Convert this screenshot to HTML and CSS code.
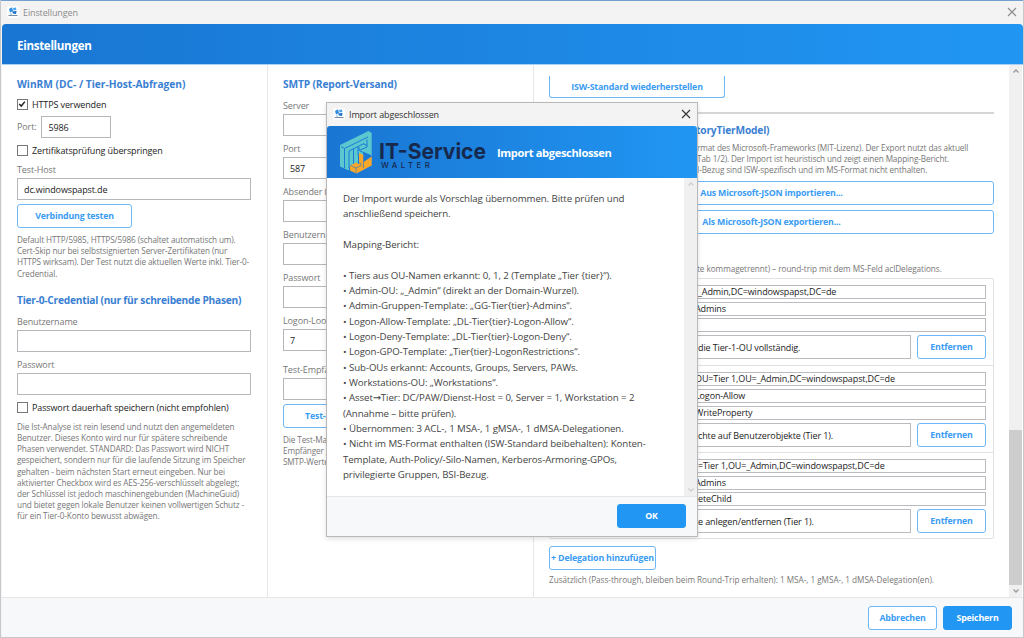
FILE: index.html
```html
<!DOCTYPE html>
<html lang="de">
  <head>
    <meta charset="utf-8" />
    <title>Einstellungen</title>
    <link rel="stylesheet" href="styles.css" />
  </head>
  <body>
    <svg class="defs" width="0" height="0">
      <symbol id="app-icon" viewBox="0 0 12 12">
        <rect width="12" height="12" rx="2" fill="#fdfdfd" />
        <path d="M2 3 L5 1.2 L6 5 L3 6.5 Z" fill="#2d8be0" />
        <path d="M6 2 L9 1.6 L9.4 4 L6.5 4.6 Z" fill="#4aa5ee" />
        <path d="M5 5.5 L9.6 5 L9 8 L6 7.6 Z" fill="#1b6fc4" />
        <path d="M1.5 9.5 H10.5" stroke="#55708c" stroke-width=".8" />
        <path d="M3 8 H5" stroke="#7fb6e6" stroke-width="1" />
      </symbol>
      <symbol id="close" viewBox="0 0 10 10">
        <path d="M1 1 L9 9 M9 1 L1 9" stroke="currentColor" stroke-width="1.1" />
      </symbol>
      <symbol id="up" viewBox="0 0 8 6">
        <path d="M1.5 4.5 L4 2 L6.5 4.5" fill="none" stroke="currentColor" stroke-width="1.3" />
      </symbol>
      <symbol id="down" viewBox="0 0 8 6">
        <path d="M1.5 1.5 L4 4 L6.5 1.5" fill="none" stroke="currentColor" stroke-width="1.3" />
      </symbol>
    </svg>

    <div class="window">
      <div class="titlebar">
        <svg class="app-icon"><use href="#app-icon" /></svg>
        <span class="title-text">Einstellungen</span>
        <svg class="close"><use href="#close" /></svg>
      </div>
      <div class="header">Einstellungen</div>

      <div class="content">
        <div class="column">
          <h2>WinRM (DC- / Tier-Host-Abfragen)</h2>
          <div class="check first">
            <span class="box"><svg viewBox="0 0 11 11"><path d="M1.5 4.8 L4 7.4 L8.4 2" fill="none" stroke="#222" stroke-width="1.8" /></svg></span>
            <span>HTTPS verwenden</span>
          </div>
          <div class="port-row">
            <span class="label">Port:</span>
            <div class="input">5986</div>
          </div>
          <div class="check second">
            <span class="box"></span>
            <span>Zertifikatsprüfung überspringen</span>
          </div>
          <div class="label">Test-Host</div>
          <div class="input">dc.windowspapst.de</div>
          <div class="button test">Verbindung testen</div>
          <p class="help">Default HTTP/5985, HTTPS/5986 (schaltet automatisch um).<br />Cert-Skip nur bei selbstsignierten Server-Zertifikaten (nur<br />HTTPS wirksam). Der Test nutzt die aktuellen Werte inkl. Tier-0-<br />Credential.</p>
          <h2 class="credential">Tier-0-Credential (nur für schreibende Phasen)</h2>
          <div class="label">Benutzername</div>
          <div class="input"></div>
          <div class="label">Passwort</div>
          <div class="input"></div>
          <div class="check third">
            <span class="box"></span>
            <span>Passwort dauerhaft speichern (nicht empfohlen)</span>
          </div>
          <p class="help">Die Ist-Analyse ist rein lesend und nutzt den angemeldeten<br />Benutzer. Dieses Konto wird nur für spätere schreibende<br />Phasen verwendet. STANDARD: Das Passwort wird NICHT<br />gespeichert, sondern nur für die laufende Sitzung im Speicher<br />gehalten - beim nächsten Start erneut eingeben. Nur bei<br />aktivierter Checkbox wird es AES-256-verschlüsselt abgelegt;<br />der Schlüssel ist jedoch maschinengebunden (MachineGuid)<br />und bietet gegen lokale Benutzer keinen vollwertigen Schutz -<br />für ein Tier-0-Konto bewusst abwägen.</p>
        </div>

        <div class="column smtp">
          <h2>SMTP (Report-Versand)</h2>
          <div class="label">Server</div>
          <div class="input"></div>
          <div class="label">Port</div>
          <div class="input">587</div>
          <div class="label">Absender (</div>
          <div class="input"></div>
          <div class="label">Benutzerna</div>
          <div class="input"></div>
          <div class="label">Passwort</div>
          <div class="input"></div>
          <div class="label">Logon-Loo</div>
          <div class="input">7</div>
          <div class="label recipient">Test-Empfä</div>
          <div class="input"></div>
          <div class="button test mail">Test-M</div>
          <p class="help">Die Test-Ma<br />Empfänger g<br />SMTP-Werte</p>
        </div>

        <div class="column tiers">
          <div class="button reset">ISW-Standard wiederherstellen</div>
          <div class="separator"></div>
          <h2 class="tail">toryTierModel)</h2>
          <p class="help tail">rmat des Microsoft-Frameworks (MIT-Lizenz). Der Export nutzt das aktuell<br />Tab 1/2). Der Import ist heuristisch und zeigt einen Mapping-Bericht.<br />I-Bezug sind ISW-spezifisch und im MS-Format nicht enthalten.</p>
          <div class="button wide">Aus Microsoft-JSON importieren...</div>
          <div class="button wide">Als Microsoft-JSON exportieren...</div>
          <p class="help tail list-help">te kommagetrennt) – round-trip mit dem MS-Feld aclDelegations.</p>
          <div class="delegations">
            <div class="delegation">
              <div class="field">_Admin,DC=windowspapst,DC=de</div>
              <div class="field cut">Admins</div>
              <div class="field"></div>
              <div class="note-row">
                <div class="field note">die Tier-1-OU vollständig.</div>
                <div class="button">Entfernen</div>
              </div>
            </div>
            <div class="delegation">
              <div class="field cut">OU=Tier 1,OU=_Admin,DC=windowspapst,DC=de</div>
              <div class="field cut">Logon-Allow</div>
              <div class="field cut">WriteProperty</div>
              <div class="note-row">
                <div class="field note">chte auf Benutzerobjekte (Tier 1).</div>
                <div class="button">Entfernen</div>
              </div>
            </div>
            <div class="delegation">
              <div class="field">=Tier 1,OU=_Admin,DC=windowspapst,DC=de</div>
              <div class="field cut">Admins</div>
              <div class="field">eteChild</div>
              <div class="note-row">
                <div class="field note cut">te anlegen/entfernen (Tier 1).</div>
                <div class="button">Entfernen</div>
              </div>
            </div>
          </div>
          <div class="button add">+ Delegation hinzufügen</div>
          <p class="help extra">Zusätzlich (Pass-through, bleiben beim Round-Trip erhalten): 1 MSA-, 1 gMSA-, 1 dMSA-Delegation(en).</p>
        </div>

        <div class="scrollbar">
          <svg class="arrow"><use href="#up" /></svg>
          <div class="thumb"></div>
          <svg class="arrow"><use href="#down" /></svg>
        </div>
      </div>

      <div class="footer">
        <div class="button">Abbrechen</div>
        <div class="button primary">Speichern</div>
      </div>
    </div>

    <div class="dialog">
      <div class="titlebar">
        <svg class="app-icon"><use href="#app-icon" /></svg>
        <span class="title-text">Import abgeschlossen</span>
        <svg class="close"><use href="#close" /></svg>
      </div>
      <div class="dialog-header">
        <svg class="logo" viewBox="0 0 150 51">
          <path d="M13 18 L41.500 4 L44.700 6 V29 L36 25 V30 L31 28 V36 L22 40 V43.500 L13 39.500 Z" fill="#5bc8cf" />
          <path d="M14 19.500 L17.500 21.500 L41 10 M17.500 22 V41 M22 24 V41 M26.500 22 V38 M22 24 L37 16.500 M31 20 V28 M32 20 V23.500 L40 20 V12.500 M36 16.500 L40 18.500 M33 24 L44 28.500" stroke="#1c79d6" stroke-width="1" fill="none" />
          <path d="M23 38.500 L29 35.500 L32 37 V26 L36.500 28 V35 L38 34 L44.700 29.500 V38.500 L29.500 46.500 L23 43.500 Z" fill="#f9a72b" />
          <path d="M29 40.500 V46 M36.500 29 V41 M23 38 L29 41 L34 38.500 V36.500 L31.500 35 V26" stroke="#1c79d6" stroke-width=".6" fill="none" />
          <text class="logo-name" x="52" y="31.500" textLength="107" lengthAdjust="spacingAndGlyphs">IT-Service</text>
          <text class="logo-sub" x="54" y="41" textLength="48.500">WALTER</text>
        </svg>
        <span>Import abgeschlossen</span>
      </div>
      <div class="dialog-body">
        <div class="report">Der Import wurde als Vorschlag übernommen. Bitte prüfen und
anschließend speichern.

Mapping-Bericht:

• Tiers aus OU-Namen erkannt: 0, 1, 2 (Template „Tier {tier}“).
• Admin-OU: „_Admin“ (direkt an der Domain-Wurzel).
• Admin-Gruppen-Template: „GG-Tier{tier}-Admins“.
• Logon-Allow-Template: „DL-Tier{tier}-Logon-Allow“.
• Logon-Deny-Template: „DL-Tier{tier}-Logon-Deny“.
• Logon-GPO-Template: „Tier{tier}-LogonRestrictions“.
• Sub-OUs erkannt: Accounts, Groups, Servers, PAWs.
• Workstations-OU: „Workstations“.
• Asset→Tier: DC/PAW/Dienst-Host = 0, Server = 1, Workstation = 2
(Annahme – bitte prüfen).
• Übernommen: 3 ACL-, 1 MSA-, 1 gMSA-, 1 dMSA-Delegationen.
• Nicht im MS-Format enthalten (ISW-Standard beibehalten): Konten-
Template, Auth-Policy/-Silo-Namen, Kerberos-Armoring-GPOs,
privilegierte Gruppen, BSI-Bezug.</div>
        <div class="scrollbar">
          <svg class="arrow"><use href="#up" /></svg>
          <svg class="arrow"><use href="#down" /></svg>
        </div>
      </div>
      <div class="dialog-footer">
        <div class="button primary">OK</div>
      </div>
    </div>
  </body>
</html>
```
FILE: styles.css
```css
* {
  box-sizing: border-box;
}
body {
  margin: 0;
  width: 1024px;
  height: 638px;
  overflow: hidden;
  background-color: #c6c8cb;
  font-family: "Open Sans", "DejaVu Sans", sans-serif;
  font-size: 9px;
  letter-spacing: -0.12px;
  color: #333;
}
.defs {
  position: absolute;
}
.window {
  display: flex;
  flex-direction: column;
  width: 1022px;
  height: 637px;
  margin-left: 1px;
  border-top: 1px solid #74a0cf;
  background-color: #f3f3f3;
}
.titlebar {
  display: flex;
  align-items: center;
  height: 23px;
  flex-shrink: 0;
  padding: 0 6px 1px 6px;
  background-color: #f3f3f3;
  color: #8c8c8c;
  font-size: 9px;
}
.app-icon {
  width: 12px;
  height: 12px;
}
.title-text {
  flex: 1;
  margin-left: 4px;
}
.close {
  width: 10px;
  height: 10px;
}
.header {
  display: flex;
  align-items: center;
  height: 41px;
  flex-shrink: 0;
  padding: 2px 0 0 15px;
  margin-left: 1px;
  border-bottom: 1px solid #a9cff5;
  border-radius: 4px 4px 0 0;
  background: linear-gradient(90deg, #1976d2, #2196f3);
  color: #fff;
  font-size: 11.6px;
  font-weight: 700;
  letter-spacing: -0.32px;
}
.content {
  display: flex;
  height: 532px;
  flex-shrink: 0;
  overflow: hidden;
  margin-left: 1px;
  background-color: #fff;
}
.column {
  width: 266px;
  flex-shrink: 0;
  padding: 12px 16px 0 15px;
  border-right: 1px solid #e6e6e6;
}
h2 {
  height: 16px;
  margin: 0;
  line-height: 15px;
  font-size: 10.2px;
  font-weight: 700;
  letter-spacing: -0.01px;
  color: #3a80d2;
  white-space: nowrap;
}
h2.credential {
  margin: 14px 0 6px;
  letter-spacing: -0.24px;
}
.check {
  display: flex;
  align-items: center;
  gap: 4px;
  height: 14px;
  color: #222;
  white-space: nowrap;
}
.check.first {
  margin: 4px 0 5px;
}
.check.second {
  margin: 5px 0 6px;
}
.check.third {
  margin: 6px 0 5px;
}
.box {
  display: block;
  width: 11px;
  height: 11px;
  border: 1px solid #777;
  background-color: #fff;
}
.box svg {
  display: block;
}
.port-row {
  display: flex;
  align-items: center;
  gap: 5px;
}
.port-row .input {
  width: 70px;
}
.label {
  height: 14px;
  margin-bottom: 1px;
  line-height: 14px;
  color: #777;
  white-space: nowrap;
}
.input {
  height: 22px;
  padding: 0 6px;
  border: 1px solid #b5b7bb;
  background-color: #fff;
  line-height: 21px;
  color: #222;
}
.input + .label {
  margin-top: 6px;
}
.button {
  display: flex;
  align-items: center;
  justify-content: center;
  height: 24px;
  border: 1px solid #6db8f7;
  border-radius: 3px;
  background-color: #fff;
  color: #3b9cf3;
  font-size: 8.8px;
  font-weight: 700;
  letter-spacing: -0.17px;
  white-space: nowrap;
}
.button.primary {
  border-color: #2196f3;
  background-color: #2196f3;
  color: #fff;
}
.button.test {
  width: 115px;
  margin-top: 4px;
}
.button.mail {
  justify-content: flex-start;
  padding-left: 21px;
}
.help {
  margin: 6px 0 0;
  font-size: 8.2px;
  line-height: 11.2px;
  color: #777;
  white-space: nowrap;
}
.smtp {
  overflow: hidden;
}
.smtp h2 {
  margin-bottom: 6px;
  letter-spacing: -0.13px;
}
.smtp .input + .recipient {
  margin-top: 12px;
}
.tiers {
  width: 475px;
  padding: 11px 15px 0;
  border-right: 0;
}
.button.reset {
  width: 176px;
  height: 22px;
  border-top: 0;
  border-radius: 0 0 3px 3px;
}
.separator {
  height: 2px;
  margin: 14px 0 9px;
  background-color: #d6d6d6;
}
/* text that continues from under the dialog */
.tail {
  padding-left: 148px;
}
.tiers h2 {
  padding-left: 147px;
  letter-spacing: -0.17px;
}
.tiers .help.tail {
  margin-top: 3px;
}
.button.wide {
  height: 24px;
  margin-top: 5px;
}
.tiers .help.list-help {
  margin: 29px 0 4px;
  letter-spacing: -0.05px;
}
.delegations {
  border: 1px solid #e2e2e2;
  border-radius: 2px;
}
.delegation {
  display: grid;
  gap: 2.8px;
  height: 86.5px;
  padding: 6px 7px 0;
  align-content: start;
}
.delegation + .delegation {
  border-top: 1px solid #e2e2e2;
}
.field {
  height: 14px;
  padding-left: 140px;
  border: 1px solid #b9bbbf;
  line-height: 12px;
  color: #222;
  white-space: nowrap;
}
.field.cut {
  padding-left: 137px;
}
.note-row {
  display: flex;
  gap: 6px;
}
.note {
  flex: 1;
  height: 24px;
  line-height: 23px;
}
.note-row .button {
  width: 69px;
}
.button.add {
  width: 107px;
  margin-top: 7px;
}
.tiers .extra {
  margin-top: 4px;
  letter-spacing: -0.03px;
}
.scrollbar {
  display: flex;
  flex-direction: column;
  align-items: center;
  justify-content: space-between;
  width: 13px;
  padding: 3px 0;
  background-color: #f0f0f0;
  color: #999;
}
.arrow {
  width: 8px;
  height: 6px;
}
.thumb {
  width: 13px;
  height: 155px;
  margin: auto 0 3px;
  background-color: #cdcdcd;
}
.footer {
  display: flex;
  justify-content: flex-end;
  gap: 6px;
  flex: 1;
  padding: 8px 11px 0 0;
  margin-left: 1px;
  border-top: 1px solid #e6e6e6;
  background-color: #f7f8fa;
}
.footer .button,
.dialog-footer .button {
  width: 69px;
}
.dialog {
  position: absolute;
  left: 326px;
  top: 102px;
  display: flex;
  flex-direction: column;
  width: 372px;
  height: 435px;
  border: 1px solid #b9b9b9;
  background-color: #f3f3f3;
  box-shadow: 0 2px 5px rgba(0, 0, 0, 0.12);
}
.dialog .titlebar {
  color: #333;
}
.dialog-header {
  display: flex;
  align-items: center;
  height: 52px;
  flex-shrink: 0;
  padding-top: 1px;
  border-radius: 3px 3px 0 0;
  background: linear-gradient(90deg, #1976d2, #2196f3);
  color: #fff;
  font-size: 11.1px;
  font-weight: 700;
  letter-spacing: -0.35px;
}
.logo {
  width: 150px;
  height: 51px;
  margin-right: 20px;
  overflow: visible;
}
.logo-name {
  font-family: Inter, sans-serif;
  font-size: 22px;
  font-weight: 700;
  letter-spacing: 0;
  fill: #16294d;
}
.logo-sub {
  font-family: Inter, sans-serif;
  font-size: 7.8px;
  font-weight: 500;
  fill: #16294d;
}
.dialog-body {
  display: flex;
  height: 318px;
  background-color: #fff;
}
.report {
  flex: 1;
  padding: 13px 0 0 16px;
  font-size: 9.7px;
  line-height: 15.33px;
  letter-spacing: -0.09px;
  color: #444;
  white-space: pre;
}
.dialog-body .scrollbar {
  color: #cfcfcf;
}
.dialog-footer {
  display: flex;
  justify-content: flex-end;
  flex: 1;
  padding: 7px 11px 0 0;
  border-top: 1px solid #e6e6e6;
  background-color: #f7f8fa;
}
```
